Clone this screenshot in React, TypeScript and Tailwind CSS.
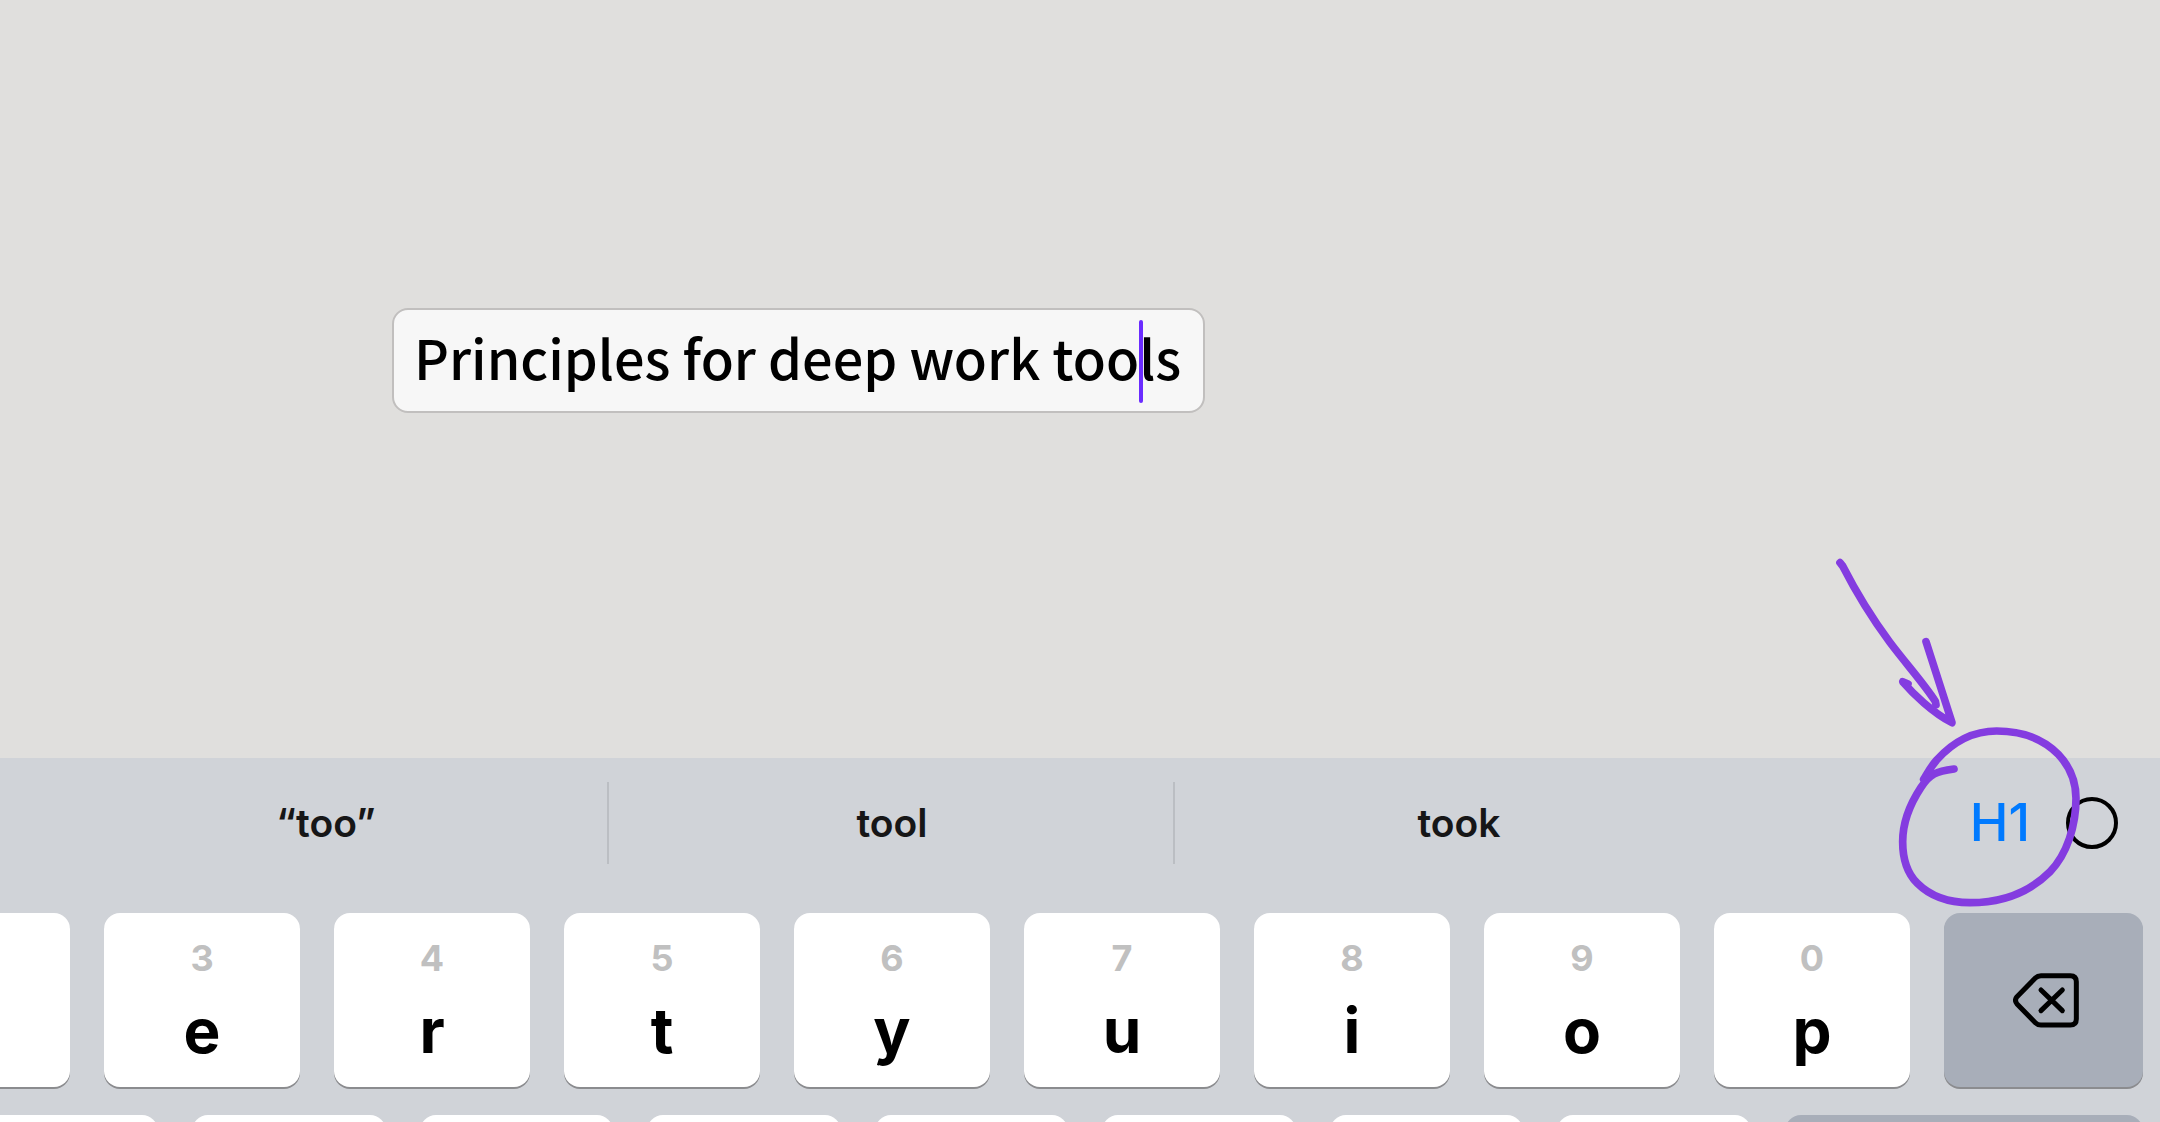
import type { ReactNode } from 'react';

const topRow = [
  { letter: 'e', digit: '3' },
  { letter: 'r', digit: '4' },
  { letter: 't', digit: '5' },
  { letter: 'y', digit: '6' },
  { letter: 'u', digit: '7' },
  { letter: 'i', digit: '8' },
  { letter: 'o', digit: '9' },
  { letter: 'p', digit: '0' },
];

const homeRow = ['d', 'f', 'g', 'h', 'j', 'k', 'l'];

const suggestions = ['“too”', 'tool', 'took'];

const Key = ({ letter, digit }: { letter: string; digit: string }) => (
  <button className="flex h-[174px] flex-col items-center rounded-2xl bg-white pt-[25px] shadow-[0_2px_0_#8b8c8f]">
    <span className="text-[36px] leading-10 font-bold text-[#c0c0c0]">{digit}</span>
    <span className="mt-4 text-[62px] leading-[74px] font-bold text-black">{letter}</span>
  </button>
);

const DeleteIcon = () => (
  <svg className="ml-1 h-[55px] w-[66px]" viewBox="0 0 198 165" fill="none" stroke="black" strokeWidth="15" strokeLinecap="round" strokeLinejoin="round">
    <path d="M84 8H172Q190 8 190 26V138Q190 156 172 156H84Q74 156 67 149L12 93Q3 82 12 71L67 15Q74 8 84 8Z" />
    <path d="M84 51L148 113M148 51L84 113" />
  </svg>
);

const Keyboard = ({ children }: { children: ReactNode }) => (
  <div className="bg-[#d0d3d8]">
    {children}

    {/* Top letter row, cut off on the left */}
    <div className="grid grid-cols-[70fr_repeat(8,196fr)_199fr] gap-[34px] pr-[17px]">
      <button aria-label="w" className="h-[174px] rounded-r-2xl bg-white shadow-[0_2px_0_#8b8c8f]" />
      {topRow.map((key) => (
        <Key key={key.letter} letter={key.letter} digit={key.digit} />
      ))}
      <button aria-label="Delete" className="flex h-[174px] items-center justify-center rounded-2xl bg-[#a8aeb9] shadow-[0_2px_0_#8b8c8f]">
        <DeleteIcon />
      </button>
    </div>

    {/* Only the top edge of the home row shows */}
    <div className="mt-7 grid h-[7px] grid-cols-[316fr_repeat(7,387fr)_716fr] gap-[34px] overflow-hidden pr-[17px]">
      <button aria-label="s" className="h-[174px] rounded-r-2xl bg-white" />
      {homeRow.map((letter) => (
        <button key={letter} aria-label={letter} className="h-[174px] rounded-2xl bg-white" />
      ))}
      <button aria-label="Return" className="h-[174px] rounded-2xl bg-[#a8aeb9]" />
    </div>
  </div>
);

const SuggestionBar = () => (
  <div className="grid h-[155px] grid-cols-[566fr_566fr_566fr_419fr] pt-6 pl-[43px]">
    {suggestions.map((word, i) => (
      <button
        key={word}
        className={`h-[82px] pl-0.5 text-[39px] font-semibold text-[#161617] ${i < 2 ? 'border-r-2 border-[#bbbec3]' : ''}`}
      >
        {word}
      </button>
    ))}
    <div className="flex h-[82px] items-center justify-end gap-9 pr-[42px]">
      <button className="text-[52px] leading-[60px] font-medium text-[#007aff]">H1</button>
      <button aria-label="Style" className="size-[52px] rounded-full border-4 border-black" />
    </div>
  </div>
);

const Annotation = () => (
  <svg
    className="pointer-events-none absolute right-0 bottom-[202px] h-[380px] w-[340px]"
    viewBox="0 0 1020 1140"
    fill="none"
    stroke="#843ce0"
    strokeWidth="23"
    strokeLinecap="round"
    strokeLinejoin="round"
  >
    <path d="M60 68L68 78C110 160 160 240 209 306C260 374 310 428 346 484L348 494" />
    <path d="M264 432L248 425C280 462 338 518 396 548L318 305" />
    <path d="M402 687C350 694 330 700 303 742C268 795 248 850 248 905C248 955 262 1000 292 1030C332 1070 390 1088 450 1088C545 1088 625 1060 690 995C742 942 768 855 768 775C768 725 750 680 715 643C670 597 610 573 530 573C450 573 395 610 350 660C328 686 322 700 311 718" />
  </svg>
);

const App = () => {
  return (
    <main className="relative flex h-screen flex-col overflow-hidden bg-[#e0dfdd] font-['Inter',sans-serif]">
      <section className="flex-1 pt-[308px] pl-[392px]">
        <div className="relative w-[813px]">
          <input
            aria-label="Title"
            defaultValue="Principles for deep work tools"
            className="block h-[105px] w-full rounded-2xl border-2 border-[#c1bfbe] bg-[#f7f7f7] pr-3 pb-2 pl-5 font-['Noto_Sans_CJK_SC',sans-serif] text-[54px] font-medium text-black outline-none"
          />
          <span className="absolute top-3 left-[747px] h-[83px] w-1 rounded-full bg-[#6b2cff]" />
        </div>
      </section>

      <Keyboard>
        <SuggestionBar />
      </Keyboard>

      <Annotation />
    </main>
  );
};

export default App;
